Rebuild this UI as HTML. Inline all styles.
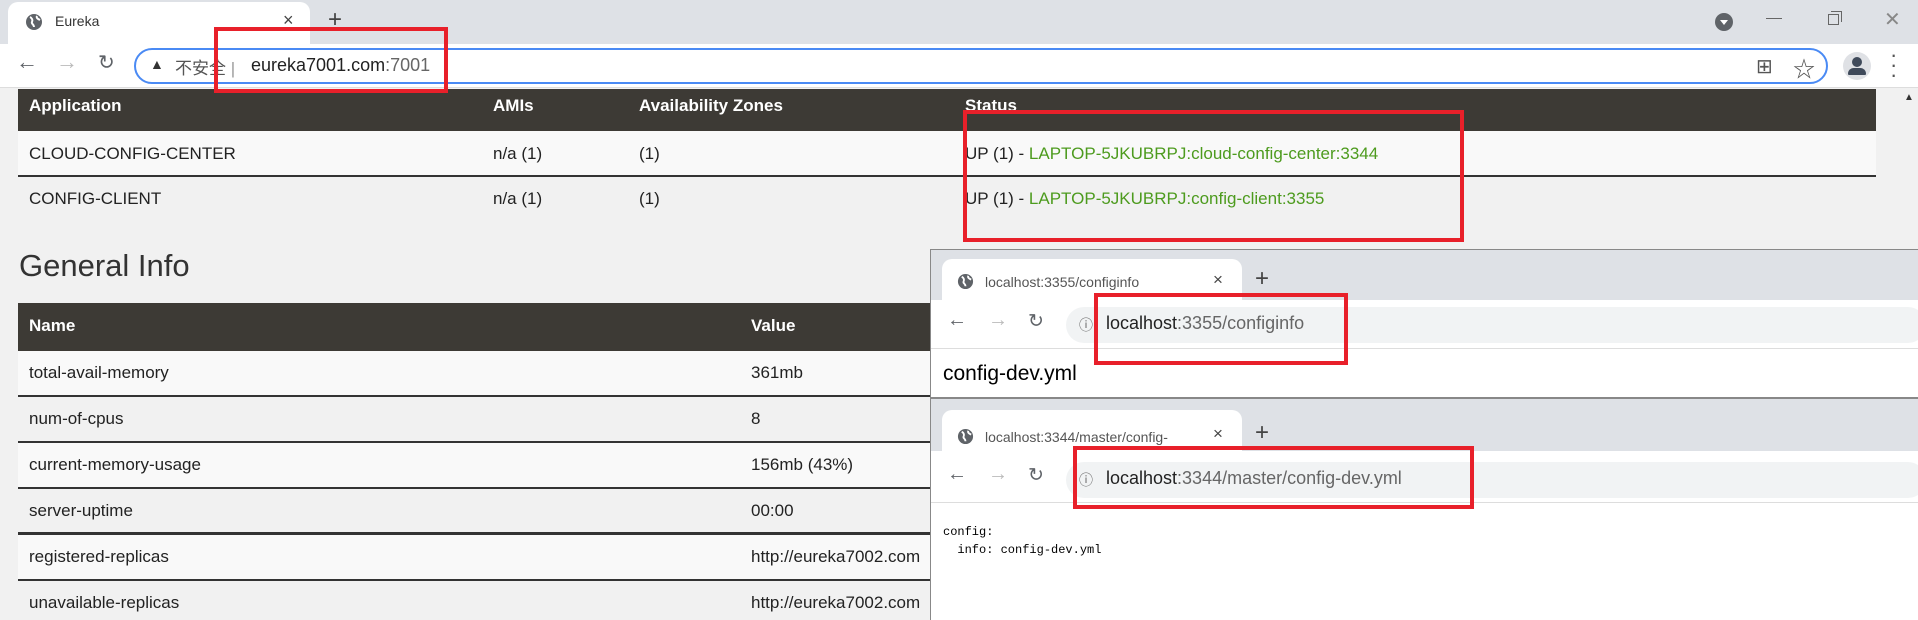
<!DOCTYPE html><html><head><meta charset="utf-8"><style>
*{margin:0;padding:0;box-sizing:border-box}
body{width:1918px;height:620px;overflow:hidden;position:relative;background:#f1f1f1;font-family:"Liberation Sans","Noto Sans CJK SC",sans-serif;color:#222}
.abs{position:absolute}
.tabbar{left:0;top:0;width:1918px;height:44px;background:#dee1e6}
.tab{background:#fff;border-radius:10px 10px 0 0}
.t{position:absolute;font-size:17px;white-space:nowrap}
.hdr{background:#3d3a35;color:#fff;font-weight:bold}
.row{background:#f9f9f9;border-bottom:2px solid #333}
.row2{background:#f1f1f1;border-bottom:2px solid #333}
.g{color:#4d9b1e}
.red{position:absolute;border:4px solid #e8202a}
</style></head><body>
<div class="abs tabbar"></div>
<div class="abs tab" style="left:8px;top:2px;width:302px;height:42px"></div>
<svg class="abs" style="left:25px;top:13px" width="18" height="18" viewBox="0 0 18 18"><circle cx="9" cy="9" r="8" fill="#5f6368"/><path d="M5 4c2 1 3 3 2 5s2 2 2 5M12 3c-1 2 1 3 3 4" stroke="#fff" stroke-width="2" fill="none"/></svg>
<div class="t" style="left:55px;top:13px;font-size:14px;color:#333">Eureka</div>
<div class="t" style="left:283px;top:10px;font-size:18px;color:#444">×</div>
<div class="t" style="left:328px;top:6px;font-size:24px;color:#444">+</div>
<svg class="abs" style="left:1714px;top:12px" width="20" height="20"><circle cx="10" cy="10" r="9" fill="#5f6368"/><path d="M6 8h8l-4 5z" fill="#fff"/></svg>
<div class="abs" style="left:1766px;top:18px;width:16px;height:1px;background:#666"></div>
<div class="abs" style="left:1828px;top:14px;width:11px;height:11px;border:1px solid #666"></div>
<div class="abs" style="left:1831px;top:11px;width:11px;height:11px;border-top:1px solid #666;border-right:1px solid #666"></div>
<div class="t" style="left:1884px;top:7px;font-size:20px;color:#888">✕</div>
<div class="abs" style="left:0;top:44px;width:1918px;height:44px;background:#fff;border-bottom:1px solid #ddd"></div>
<div class="t" style="left:16px;top:49px;font-size:22px;color:#5f6368">←</div>
<div class="t" style="left:56px;top:49px;font-size:22px;color:#bbb">→</div>
<div class="t" style="left:98px;top:50px;font-size:20px;color:#5f6368">↻</div>
<div class="abs" style="left:134px;top:48px;width:1694px;height:36px;border:2px solid #4a8af4;border-radius:18px;background:#fff"></div>
<div class="t" style="left:150px;top:56px;font-size:14px;color:#333">▲</div>
<div class="t" style="left:175px;top:54px;font-size:17px;color:#555">不安全 <span style="color:#999">|</span></div>
<div class="t" style="left:251px;top:55px;font-size:18px;color:#222">eureka7001.com<span style="color:#666">:7001</span></div>
<div class="t" style="left:1756px;top:54px;font-size:20px;color:#555">⊞</div>
<div class="t" style="left:1793px;top:52px;font-size:22px;color:#555">☆</div>
<div class="abs" style="left:1843px;top:52px;width:28px;height:28px;border-radius:50%;background:#dfe1e5"></div>
<div class="abs" style="left:1852px;top:57px;width:10px;height:10px;border-radius:50%;background:#3f4a5a"></div>
<div class="abs" style="left:1848px;top:68px;width:18px;height:7px;border-radius:9px 9px 2px 2px;background:#3f4a5a"></div>
<div class="t" style="left:1890px;top:50px;font-size:22px;color:#555;line-height:10px">·<br>·<br>·</div>
<div class="abs" style="left:1876px;top:89px;width:42px;height:531px;background:#f1f1f1"></div>
<div class="t" style="left:1904px;top:92px;font-size:10px;color:#333">▲</div>
<div class="abs hdr" style="left:18px;top:89px;width:1858px;height:42px"></div>
<div class="t" style="left:29px;top:96px;color:#fff;font-weight:bold">Application</div>
<div class="t" style="left:493px;top:96px;color:#fff;font-weight:bold">AMIs</div>
<div class="t" style="left:639px;top:96px;color:#fff;font-weight:bold">Availability Zones</div>
<div class="t" style="left:965px;top:96px;color:#fff;font-weight:bold">Status</div>
<div class="abs row" style="left:18px;top:131px;width:1858px;height:46px"></div>
<div class="t" style="left:29px;top:144px">CLOUD-CONFIG-CENTER</div>
<div class="t" style="left:493px;top:144px">n/a (1)</div>
<div class="t" style="left:639px;top:144px">(1)</div>
<div class="t" style="left:965px;top:144px">UP (1) - <span class="g">LAPTOP-5JKUBRPJ:cloud-config-center:3344</span></div>
<div class="t" style="left:29px;top:189px">CONFIG-CLIENT</div>
<div class="t" style="left:493px;top:189px">n/a (1)</div>
<div class="t" style="left:639px;top:189px">(1)</div>
<div class="t" style="left:965px;top:189px">UP (1) - <span class="g">LAPTOP-5JKUBRPJ:config-client:3355</span></div>
<div class="t" style="left:19px;top:248px;font-size:31px;color:#333">General Info</div>
<div class="abs hdr" style="left:18px;top:303px;width:1858px;height:48px"></div>
<div class="t" style="left:29px;top:316px;color:#fff;font-weight:bold">Name</div>
<div class="t" style="left:751px;top:316px;color:#fff;font-weight:bold">Value</div>
<div class="abs row" style="left:18px;top:351px;width:1858px;height:46px"></div>
<div class="abs row2" style="left:18px;top:397px;width:1858px;height:46px"></div>
<div class="abs row" style="left:18px;top:443px;width:1858px;height:46px"></div>
<div class="abs row2" style="left:18px;top:489px;width:1858px;height:46px;border-bottom-width:3px"></div>
<div class="abs row" style="left:18px;top:535px;width:1858px;height:46px"></div>
<div class="t" style="left:29px;top:363px">total-avail-memory</div><div class="t" style="left:751px;top:363px">361mb</div>
<div class="t" style="left:29px;top:409px">num-of-cpus</div><div class="t" style="left:751px;top:409px">8</div>
<div class="t" style="left:29px;top:455px">current-memory-usage</div><div class="t" style="left:751px;top:455px">156mb (43%)</div>
<div class="t" style="left:29px;top:501px">server-uptime</div><div class="t" style="left:751px;top:501px">00:00</div>
<div class="t" style="left:29px;top:547px">registered-replicas</div><div class="t" style="left:751px;top:547px">http://eureka7002.com</div>
<div class="t" style="left:29px;top:593px">unavailable-replicas</div><div class="t" style="left:751px;top:593px">http://eureka7002.com</div>
<div class="abs" style="left:930px;top:249px;width:988px;height:150px;background:#fff;border-left:1px solid #888;border-top:1px solid #888"></div>
<div class="abs" style="left:931px;top:250px;width:987px;height:50px;background:#dee1e6"></div>
<div class="abs tab" style="left:942px;top:259px;width:300px;height:41px"></div>
<svg class="abs" style="left:957px;top:273px" width="17" height="17" viewBox="0 0 18 18"><circle cx="9" cy="9" r="8" fill="#5f6368"/><path d="M5 4c2 1 3 3 2 5s2 2 2 5M12 3c-1 2 1 3 3 4" stroke="#fff" stroke-width="2" fill="none"/></svg>
<div class="t" style="left:985px;top:274px;font-size:14px;color:#555">localhost:3355/configinfo</div>
<div class="t" style="left:1213px;top:270px;font-size:17px;color:#444">×</div>
<div class="t" style="left:1255px;top:265px;font-size:24px;color:#444">+</div>
<div class="abs" style="left:931px;top:300px;width:987px;height:49px;background:#fff;border-bottom:1px solid #ddd"></div>
<div class="t" style="left:947px;top:309px;font-size:20px;color:#5f6368">←</div>
<div class="t" style="left:988px;top:309px;font-size:20px;color:#bbb">→</div>
<div class="t" style="left:1028px;top:310px;font-size:19px;color:#5f6368">↻</div>
<div class="abs" style="left:1066px;top:307px;width:860px;height:36px;border-radius:18px;background:#f1f3f4"></div>
<div class="t" style="left:1079px;top:315px;font-size:14px;color:#666">ⓘ</div>
<div class="t" style="left:1106px;top:313px;font-size:18px;color:#222">localhost<span style="color:#666">:3355/configinfo</span></div>
<div class="t" style="left:943px;top:362px;font-size:21px;color:#000">config-dev.yml</div>
<div class="abs" style="left:930px;top:397px;width:988px;height:223px;background:#fff;border-left:1px solid #888;border-top:2px solid #888"></div>
<div class="abs" style="left:931px;top:399px;width:987px;height:52px;background:#dee1e6"></div>
<div class="abs tab" style="left:942px;top:410px;width:300px;height:41px"></div>
<svg class="abs" style="left:957px;top:428px" width="17" height="17" viewBox="0 0 18 18"><circle cx="9" cy="9" r="8" fill="#5f6368"/><path d="M5 4c2 1 3 3 2 5s2 2 2 5M12 3c-1 2 1 3 3 4" stroke="#fff" stroke-width="2" fill="none"/></svg>
<div class="t" style="left:985px;top:429px;font-size:14px;color:#555">localhost:3344/master/config-</div>
<div class="t" style="left:1213px;top:424px;font-size:17px;color:#444">×</div>
<div class="t" style="left:1255px;top:419px;font-size:24px;color:#444">+</div>
<div class="abs" style="left:931px;top:451px;width:987px;height:52px;background:#fff;border-bottom:1px solid #ddd"></div>
<div class="t" style="left:947px;top:463px;font-size:20px;color:#5f6368">←</div>
<div class="t" style="left:988px;top:463px;font-size:20px;color:#bbb">→</div>
<div class="t" style="left:1028px;top:464px;font-size:19px;color:#5f6368">↻</div>
<div class="abs" style="left:1066px;top:462px;width:860px;height:36px;border-radius:18px;background:#f1f3f4"></div>
<div class="t" style="left:1079px;top:470px;font-size:14px;color:#666">ⓘ</div>
<div class="t" style="left:1106px;top:468px;font-size:18px;color:#222">localhost<span style="color:#666">:3344/master/config-dev.yml</span></div>
<div class="t" style="left:943px;top:523px;font-size:12px;font-family:'Liberation Mono',monospace;color:#000;line-height:18px">config:<br>&nbsp;&nbsp;info: config-dev.yml</div>
<div class="red" style="left:214px;top:27px;width:234px;height:66px"></div>
<div class="red" style="left:963px;top:110px;width:501px;height:132px"></div>
<div class="red" style="left:1094px;top:293px;width:254px;height:72px"></div>
<div class="red" style="left:1073px;top:446px;width:401px;height:63px"></div>
</body></html>
